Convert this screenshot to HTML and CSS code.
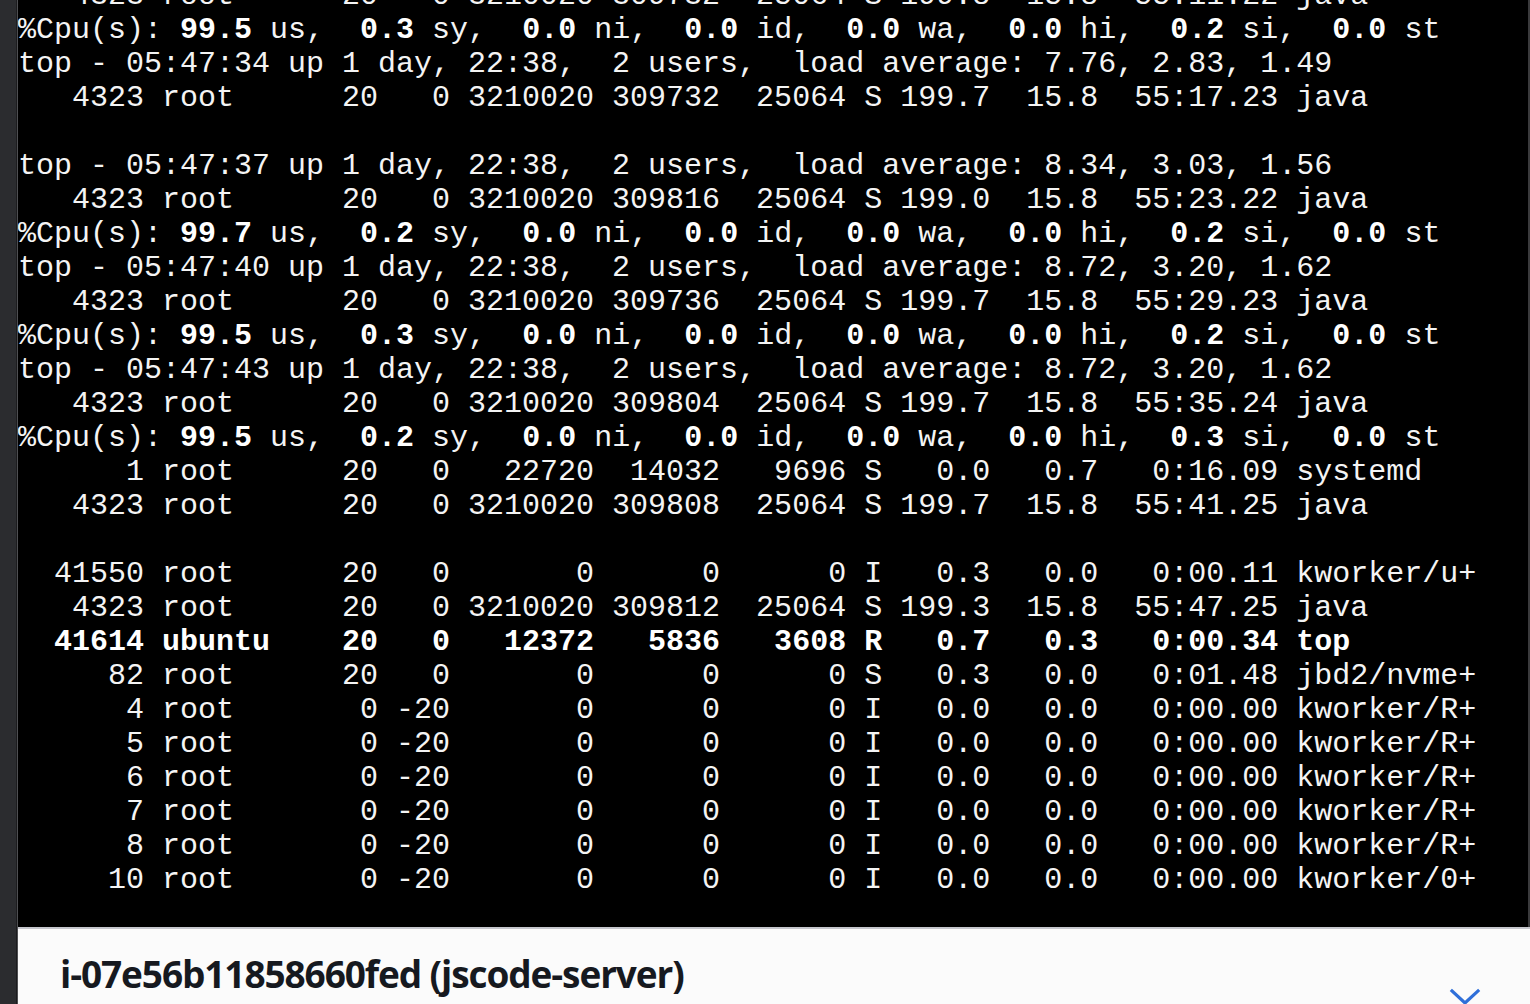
FILE: index.html
```html
<!DOCTYPE html>
<html>
<head>
<meta charset="utf-8">
<link rel="stylesheet" href="styles.css">
</head>
<body>
<div class="rail"></div>
<div class="main">
  <div class="term">
<div class="ln">   4323 root      20   0 3210020 309732  25064 S 199.8  15.8  55:11.22 java</div>
<div class="ln">%Cpu(s):<b> 99.5 </b>us,<b>  0.3 </b>sy,<b>  0.0 </b>ni,<b>  0.0 </b>id,<b>  0.0 </b>wa,<b>  0.0 </b>hi,<b>  0.2 </b>si,<b>  0.0 </b>st</div>
<div class="ln">top - 05:47:34 up 1 day, 22:38,  2 users,  load average: 7.76, 2.83, 1.49</div>
<div class="ln">   4323 root      20   0 3210020 309732  25064 S 199.7  15.8  55:17.23 java</div>
<div class="ln"> </div>
<div class="ln">top - 05:47:37 up 1 day, 22:38,  2 users,  load average: 8.34, 3.03, 1.56</div>
<div class="ln">   4323 root      20   0 3210020 309816  25064 S 199.0  15.8  55:23.22 java</div>
<div class="ln">%Cpu(s):<b> 99.7 </b>us,<b>  0.2 </b>sy,<b>  0.0 </b>ni,<b>  0.0 </b>id,<b>  0.0 </b>wa,<b>  0.0 </b>hi,<b>  0.2 </b>si,<b>  0.0 </b>st</div>
<div class="ln">top - 05:47:40 up 1 day, 22:38,  2 users,  load average: 8.72, 3.20, 1.62</div>
<div class="ln">   4323 root      20   0 3210020 309736  25064 S 199.7  15.8  55:29.23 java</div>
<div class="ln">%Cpu(s):<b> 99.5 </b>us,<b>  0.3 </b>sy,<b>  0.0 </b>ni,<b>  0.0 </b>id,<b>  0.0 </b>wa,<b>  0.0 </b>hi,<b>  0.2 </b>si,<b>  0.0 </b>st</div>
<div class="ln">top - 05:47:43 up 1 day, 22:38,  2 users,  load average: 8.72, 3.20, 1.62</div>
<div class="ln">   4323 root      20   0 3210020 309804  25064 S 199.7  15.8  55:35.24 java</div>
<div class="ln">%Cpu(s):<b> 99.5 </b>us,<b>  0.2 </b>sy,<b>  0.0 </b>ni,<b>  0.0 </b>id,<b>  0.0 </b>wa,<b>  0.0 </b>hi,<b>  0.3 </b>si,<b>  0.0 </b>st</div>
<div class="ln">      1 root      20   0   22720  14032   9696 S   0.0   0.7   0:16.09 systemd</div>
<div class="ln">   4323 root      20   0 3210020 309808  25064 S 199.7  15.8  55:41.25 java</div>
<div class="ln"> </div>
<div class="ln">  41550 root      20   0       0      0      0 I   0.3   0.0   0:00.11 kworker/u+</div>
<div class="ln">   4323 root      20   0 3210020 309812  25064 S 199.3  15.8  55:47.25 java</div>
<div class="ln bold">  41614 ubuntu    20   0   12372   5836   3608 R   0.7   0.3   0:00.34 top</div>
<div class="ln">     82 root      20   0       0      0      0 S   0.3   0.0   0:01.48 jbd2/nvme+</div>
<div class="ln">      4 root       0 -20       0      0      0 I   0.0   0.0   0:00.00 kworker/R+</div>
<div class="ln">      5 root       0 -20       0      0      0 I   0.0   0.0   0:00.00 kworker/R+</div>
<div class="ln">      6 root       0 -20       0      0      0 I   0.0   0.0   0:00.00 kworker/R+</div>
<div class="ln">      7 root       0 -20       0      0      0 I   0.0   0.0   0:00.00 kworker/R+</div>
<div class="ln">      8 root       0 -20       0      0      0 I   0.0   0.0   0:00.00 kworker/R+</div>
<div class="ln">     10 root       0 -20       0      0      0 I   0.0   0.0   0:00.00 kworker/0+</div>
  </div>
  <div class="panel">
    <h2 class="title">i-07e56b11858660fed (jscode-server)</h2>
    <svg class="chev" width="32" height="20" viewBox="0 0 32 20"><path d="M3 3 L16 15 L29 3" fill="none" stroke="#2f6fd9" stroke-width="3.2" stroke-linecap="square"/></svg>
  </div>
</div>
</body>
</html>
```

FILE: styles.css
```css
html, body {
  margin: 0;
  padding: 0;
  height: 1004px;
  overflow: hidden;
  background: #fbfbfb;
}
body {
  display: flex;
  flex-direction: row;
}
.rail {
  width: 16px;
  flex: none;
  background: #2b2c2f;
  border-right: 1px solid #1c1c1e;
  position: relative;
}
.rail::after {
  content: "";
  position: absolute;
  top: 0;
  bottom: 0;
  right: -2px;
  width: 1px;
  background: #4e4f52;
}
.main {
  flex: 1;
  display: flex;
  flex-direction: column;
  margin-left: 1px;
  min-width: 0;
}
.term {
  height: 927px;
  flex: none;
  background: #000;
  border-right: 2px solid #3a3a3c;
  box-sizing: border-box;
  overflow: hidden;
  display: flex;
  flex-direction: column;
  justify-content: flex-end;
  padding: 0 0 30px 0;
  color: #f4f4f4;
  font-family: "Liberation Mono", "DejaVu Sans Mono", monospace;
  font-size: 30px;
  line-height: 34px;
}
.ln {
  white-space: pre;
  height: 34px;
  flex: none;
}
.ln b, .bold {
  font-weight: bold;
  color: #fff;
}
.panel {
  flex: 1;
  border-top: 2px solid #c6c7cd;
  background: #fbfbfb;
  display: flex;
  flex-direction: row;
  align-items: flex-start;
  justify-content: space-between;
  padding: 22px 0 0 42px;
}
.title {
  margin: 0;
  font-family: "Open Sans", "Lato", sans-serif;
  font-weight: 700;
  font-size: 37px;
  line-height: 46px;
  color: #16191f;
  letter-spacing: -1.1px;
}
.chev {
  margin: 37px 49px 0 0;
  flex: none;
}
```
